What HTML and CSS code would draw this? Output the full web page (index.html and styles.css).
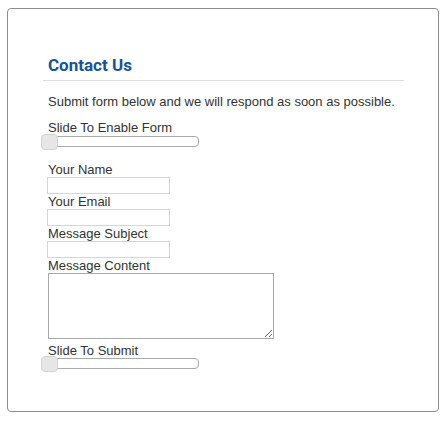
FILE: index.html
```html
<!DOCTYPE html>
<html>
<head>
<meta charset="utf-8">
<link rel="stylesheet" href="styles.css">
</head>
<body>
<div class="box">
  <h2 class="title">Contact Us</h2>
  <p class="intro">Submit form below and we will respond as soon as possible.</p>
  <form class="form">
    <div class="label">Slide To Enable Form</div>
    <div class="slider slider-enable"><span class="handle"></span></div>
    <div class="fields">
      <label class="label">Your Name</label>
      <input class="field" type="text">
      <label class="label">Your Email</label>
      <input class="field" type="text">
      <label class="label">Message Subject</label>
      <input class="field" type="text">
      <label class="label">Message Content</label>
      <textarea class="area"></textarea>
    </div>
    <div class="label label-submit">Slide To Submit</div>
    <div class="slider"><span class="handle"></span></div>
  </form>
</div>
</body>
</html>
```
FILE: styles.css
```css
html, body {
  margin: 0;
  padding: 0;
  background: #fff;
}
body {
  font-family: "Liberation Sans", Arial, sans-serif;
  font-size: 13px;
  color: #333;
}
.box {
  box-sizing: border-box;
  width: 432px;
  height: 404px;
  margin: 8px 0 0 7px;
  border: 1px solid #8c8c8c;
  border-radius: 4px;
  padding: 0 34px 0 35px;
}
.title {
  margin: 46px 0 0 0;
  padding: 0 0 5px 5px;
  font-family: Roboto, "Liberation Sans", sans-serif;
  font-weight: 700;
  font-size: 17px;
  line-height: 20px;
  color: #175495;
  border-bottom: 1px solid #dedede;
}
.intro {
  margin: 13px 0 0 0;
  padding-left: 5px;
  line-height: 15px;
}
.form {
  margin: 11px 0 0 0;
  padding-left: 5px;
}
.label {
  display: block;
  line-height: 15px;
}
.slider {
  position: relative;
  box-sizing: border-box;
  width: 151px;
  height: 11px;
  border: 1px solid #aaa;
  border-radius: 4px;
  background: #fff;
}
.slider-enable {
  margin-top: 1px;
}
.handle {
  position: absolute;
  left: -8px;
  top: -3px;
  box-sizing: border-box;
  width: 17px;
  height: 16px;
  border: 1px solid #d3d3d3;
  border-radius: 4px;
  background: #e6e6e6;
}
.fields {
  margin-top: 15px;
}
.field {
  display: block;
  box-sizing: border-box;
  width: 123px;
  height: 17px;
  margin: 0 0 0 -1px;
  padding: 0;
  border: 1px solid #d6d6d6;
  background: #fff;
}
.area {
  display: block;
  box-sizing: border-box;
  width: 226px;
  height: 66px;
  margin: 0;
  padding: 0;
  border: 1px solid #a9a9a9;
  background: #fff;
}
.label-submit {
  margin-top: 4px;
}
```
